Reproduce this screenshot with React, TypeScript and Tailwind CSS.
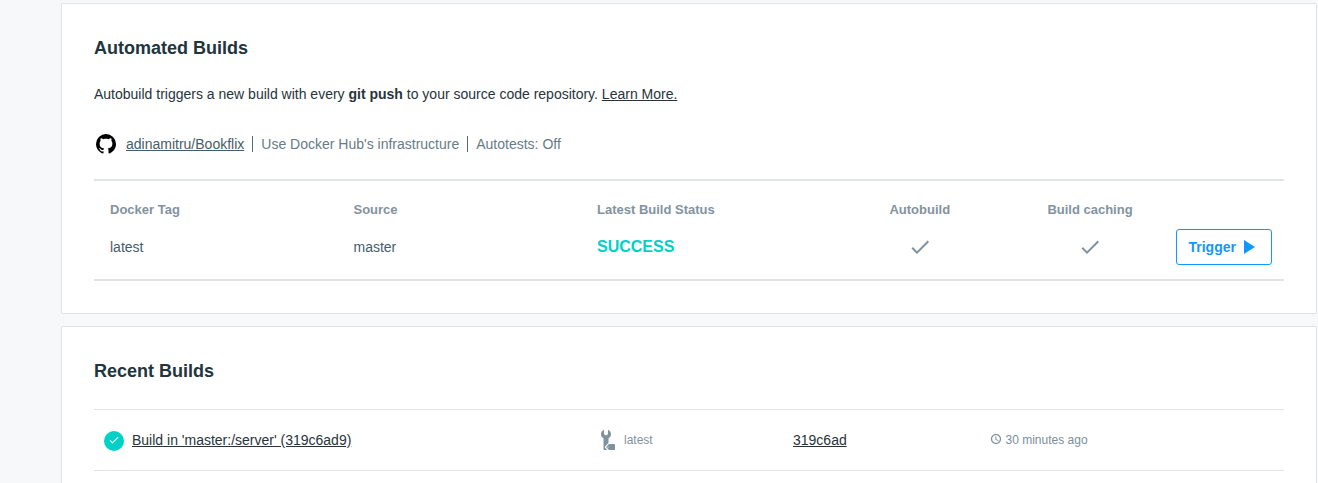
import React from 'react';

const Check = ({ className }: { className: string }) => (
  <svg viewBox="0 0 24 24" className={className} fill="currentColor">
    <path d="M21,7L9,19L3.5,13.5L4.91,12.09L9,16.17L19.59,5.59L21,7Z" />
  </svg>
);

const Github = () => (
  <svg viewBox="0 0 24 24" className="size-6 shrink-0 text-black" fill="currentColor">
    <path d="M12,2A10,10 0 0,0 2,12C2,16.42 4.87,20.17 8.84,21.5C9.34,21.58 9.5,21.27 9.5,21C9.5,20.77 9.5,20.14 9.5,19.31C6.73,19.91 6.14,17.97 6.14,17.97C5.68,16.81 5.03,16.5 5.03,16.5C4.12,15.88 5.1,15.9 5.1,15.9C6.1,15.97 6.63,16.93 6.63,16.93C7.5,18.45 8.97,18 9.54,17.76C9.63,17.11 9.89,16.67 10.17,16.42C7.95,16.17 5.62,15.31 5.62,11.5C5.62,10.39 6,9.5 6.65,8.79C6.55,8.54 6.2,7.5 6.75,6.15C6.75,6.15 7.59,5.88 9.5,7.17C10.29,6.95 11.15,6.84 12,6.84C12.85,6.84 13.71,6.95 14.5,7.17C16.41,5.88 17.25,6.15 17.25,6.15C17.8,7.5 17.45,8.54 17.35,8.79C18,9.5 18.38,10.39 18.38,11.5C18.38,15.32 16.04,16.16 13.81,16.41C14.17,16.72 14.5,17.33 14.5,18.26C14.5,19.6 14.5,20.68 14.5,21C14.5,21.27 14.66,21.59 15.17,21.5C19.14,20.16 22,16.42 22,12A10,10 0 0,0 12,2Z" />
  </svg>
);

const BuildTool = () => (
  <svg viewBox="0 0 16 22" className="h-[22px] w-4 shrink-0" fill="#7f939f">
    <path d="M4 .8v4.400l2 1.300 2-1.300V.8C9.900 1.600 11 3.200 11 5.200c0 1.800-.9 3.200-2.500 4V14L4.800 17.700v.8L7.300 21H4.600c-.7 0-1.100-.4-1.100-1.100V9.200C1.900 8.400 1 7 1 5.200 1 3.200 2.100 1.600 4 .8z" />
    <path d="M9 15h5.200c.5 0 .8.3.8.8v4.400c0 .5-.3.8-.8.8H9l-3-3zM8 17.400a.6.6 0 1 0 0 1.200.6.6 0 0 0 0-1.200z" fillRule="evenodd" />
  </svg>
);

const Clock = () => (
  <svg viewBox="0 0 24 24" className="mb-0.5 size-3 shrink-0" fill="currentColor" stroke="currentColor" strokeWidth="0.4">
    <path d="M11.99 2C6.47 2 2 6.48 2 12s4.47 10 9.99 10C17.52 22 22 17.52 22 12S17.52 2 11.99 2zM12 20c-4.42 0-8-3.58-8-8s3.58-8 8-8 8 3.580 8 8-3.580 8-8 8zM12.500 7H11v6l5.250 3.150.75-1.230-4.500-2.670z" />
  </svg>
);

const columns = 'grid grid-cols-[243.500px_243.500px_238px_170px_171px_96px]';

export default function App() {
  return (
    <main className="flex h-[483px] flex-col gap-3 overflow-hidden bg-[#f7f8fa] pt-[3px] pr-px pl-[61px] font-['Liberation_Sans',Arial,sans-serif] text-sm text-[#27343b]">
      <section className="h-[311px] shrink-0 rounded-[2px] border border-[#e0e4e7] bg-white px-8 pt-8">
        <h2 className="text-lg leading-6 font-bold text-[#22343c]">Automated Builds</h2>
        <p className="mt-6 leading-5">
          Autobuild triggers a new build with every <strong>git push</strong> to your source code repository.{' '}
          <a className="underline">Learn More.</a>
        </p>
        <div className="mt-7 flex h-6 items-center text-[#677c88]">
          <Github />
          <a className="ml-2 text-[#445d6e] underline">adinamitru/Bookflix</a>
          <span className="ml-2 h-4 border-l border-[#556d7c]" />
          <span className="ml-2">Use Docker Hub's infrastructure</span>
          <span className="ml-2 h-4 border-l border-[#556d7c]" />
          <span className="ml-2">Autotests: Off</span>
        </div>
        <div className="mt-[23px] h-[102px] border-y-2 border-[#e0e4e7] pl-4">
          <div className={`${columns} mt-5 h-[18px] items-center text-[13px] leading-[18px] font-bold text-[#8293a0]`}>
            <span>Docker Tag</span>
            <span>Source</span>
            <span>Latest Build Status</span>
            <span className="pr-[0.500px] text-center">Autobuild</span>
            <span className="pr-px text-center">Build caching</span>
          </div>
          <div className={`${columns} mt-[10px] h-9 items-center text-[#445d6e]`}>
            <span>latest</span>
            <span>master</span>
            <span className="text-base leading-5 font-bold text-[#00d1c7]">SUCCESS</span>
            <Check className="size-6 justify-self-center text-[#7f939f]" />
            <Check className="mr-px size-6 justify-self-center text-[#7f939f]" />
            <button className="flex h-9 w-24 items-center rounded-[3px] border border-[#1098ff] pl-[11.500px] font-bold text-[#1098ff]">
              Trigger
              <svg viewBox="0 0 12 14" className="ml-2 h-[14px] w-3" fill="currentColor">
                <path d="M0 0v14l11-7z" />
              </svg>
            </button>
          </div>
        </div>
      </section>
      <section className="h-[200px] shrink-0 rounded-[2px] border border-[#e0e4e7] bg-white px-8 pt-8">
        <h2 className="text-lg leading-6 font-bold text-[#22343c]">Recent Builds</h2>
        <div className="mt-[26px] flex h-[62px] items-center border-y border-[#e0e4e7] pl-[10px]">
          <span className="mt-0.5 flex size-5 items-center justify-center rounded-full bg-[#00d1c7] pb-0.5 text-white">
            <Check className="size-3" />
          </span>
          <a className="ml-2 w-[468px] underline">Build in 'master:/server' (319c6ad9)</a>
          <div className="flex w-[193px] items-center gap-2 text-xs text-[#8293a0]">
            <BuildTool />
            <span>latest</span>
          </div>
          <a className="w-[197px] underline">319c6ad</a>
          <div className="flex items-center gap-[3.500px] text-xs text-[#7a8e9b]">
            <Clock />
            <span>30 minutes ago</span>
          </div>
        </div>
      </section>
    </main>
  );
}
